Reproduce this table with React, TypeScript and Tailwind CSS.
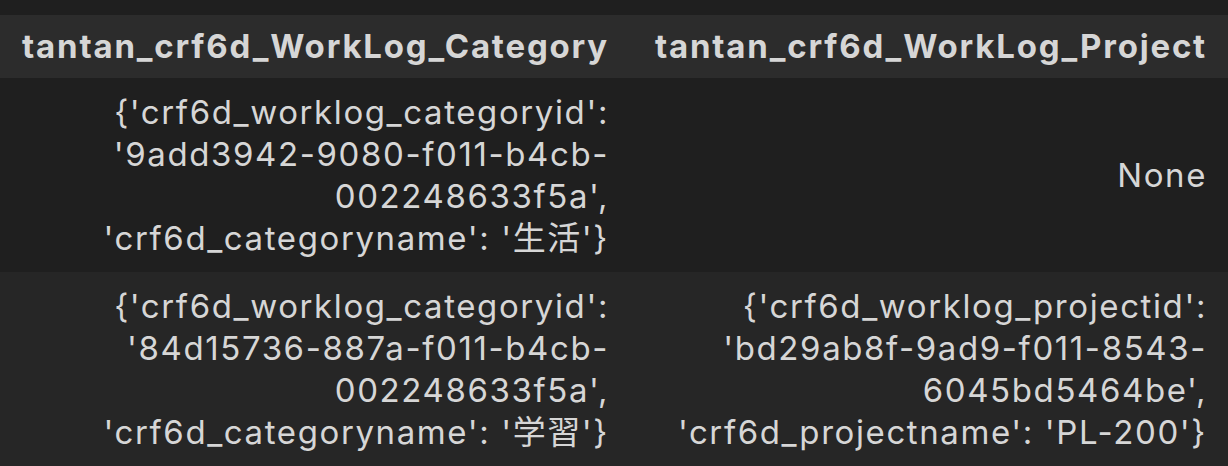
import React from "react";

type Row = {
    category: string[];
    project: string[] | null;
};

const rows: Row[] = [
    {
        category: [
            "{'crf6d_worklog_categoryid':",
            "'9add3942-9080-f011-b4cb-",
            "002248633f5a',",
            "'crf6d_categoryname': '生活'}",
        ],
        project: null,
    },
    {
        category: [
            "{'crf6d_worklog_categoryid':",
            "'84d15736-887a-f011-b4cb-",
            "002248633f5a',",
            "'crf6d_categoryname': '学習'}",
        ],
        project: [
            "{'crf6d_worklog_projectid':",
            "'bd29ab8f-9ad9-f011-8543-",
            "6045bd5464be',",
            "'crf6d_projectname': 'PL-200'}",
        ],
    },
];

const Cell = ({ lines }: { lines: string[] | null }) => (
    <td className="px-[21px] py-[13px] text-right align-middle">
        {lines ? (
            lines.map((l, i) => (
                <div key={i} className="whitespace-nowrap">{l}</div>
            ))
        ) : (
            <div>None</div>
        )}
    </td>
);

export default function App() {
    return (
        <div
            className="w-[1228px] h-[466px] overflow-hidden bg-[#1f1f1f] pt-[15px] text-[#d6d6d6]"
            style={{ fontFamily: "Inter, 'Noto Sans CJK JP', sans-serif" }}
        >
            <table className="w-full border-collapse">
                <thead>
                    <tr className="bg-[#2c2c2c] h-[63px]">
                        <th className="w-[630px] px-[21px] text-right text-[33px] font-bold tracking-[1.8px]">tantan_crf6d_WorkLog_Category</th>
                        <th className="px-[21px] text-right text-[33px] font-bold tracking-[1.8px]">tantan_crf6d_WorkLog_Project</th>
                    </tr>
                </thead>
                <tbody className="text-[33px] leading-[42px] tracking-[1.6px]">
                    {rows.map((r, i) => (
                        <tr key={i} className={i % 2 === 0 ? "bg-[#1f1f1f]" : "bg-[#262626]"}>
                            <Cell lines={r.category} />
                            <Cell lines={r.project} />
                        </tr>
                    ))}
                </tbody>
            </table>
        </div>
    );
}
